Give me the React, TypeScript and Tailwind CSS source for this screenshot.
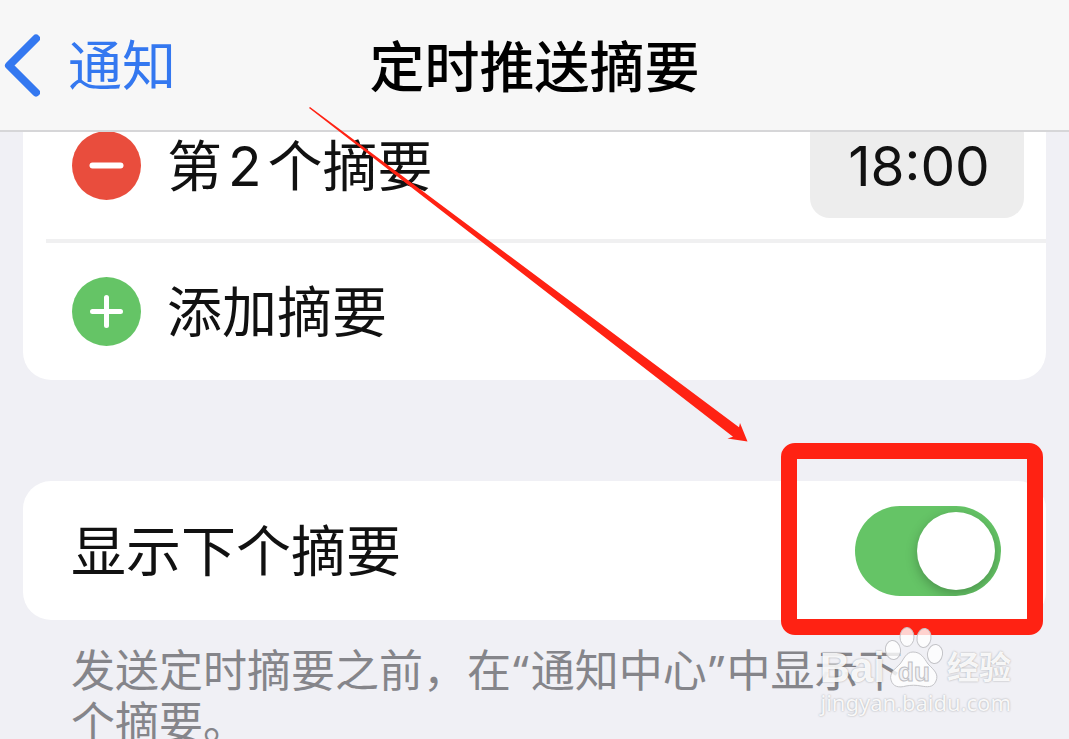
import React, { useState } from 'react';

interface SummaryRowProps {
  kind: 'remove' | 'add';
  children: React.ReactNode;
}

const RoundIcon: React.FC<{ kind: SummaryRowProps['kind'] }> = ({ kind }) => (
  <svg className="h-[69px] w-[69px] shrink-0" viewBox="0 0 69 69" fill="none" aria-hidden="true">
    <circle cx="34.5" cy="34.5" r="34.5" fill={kind === 'add' ? '#65c466' : '#e94d3d'} />
    <path d={kind === 'add' ? 'M20.5 34.5h28M34.5 20.5v28' : 'M20.5 34.5h28'} stroke="white" strokeWidth={kind === 'add' ? 5 : 6} strokeLinecap="round" />
  </svg>
);

const SummaryButton: React.FC<SummaryRowProps> = ({ kind, children }) => (
  <button type="button" className="flex items-center gap-[26px] text-[55px] leading-[64px] text-[#111]">
    <RoundIcon kind={kind} />
    <span>{children}</span>
  </button>
);

const NavBar = () => (
  <header className="relative z-10 grid h-[132px] shrink-0 grid-cols-[1fr_auto_1fr] items-center border-b-2 border-[#d6d6d8] bg-[#f7f7f7]">
    <a href="#notifications" className="flex items-center gap-7 pl-1 text-[54px] leading-[64px] text-[#3478f0]">
      <svg className="h-16 w-9" viewBox="0 0 36 64" fill="none" aria-hidden="true">
        <path d="M32 5.5L5 32.5L32 59.5" stroke="currentColor" strokeWidth="8" strokeLinecap="round" strokeLinejoin="round" />
      </svg>
      <span className="pt-1">通知</span>
    </a>
    <h1 className="pt-1 text-[55px] font-medium leading-[64px] text-black">定时推送摘要</h1>
  </header>
);

const Arrow = () => (
  <svg className="pointer-events-none absolute left-[309px] top-[107px] z-20 h-[335px] w-[439px]" viewBox="0 0 439 335" aria-hidden="true">
    <path d="M0 1L1 0L430 320.3L431 316L438.5 334.5L418.5 331.5L424 329.7Z" fill="#ff2213" />
  </svg>
);

const Watermark = () => (
  <div className="pointer-events-none absolute right-[58px] top-[624px] z-20 flex flex-col items-end text-white/90 [text-shadow:0_0_2px_rgba(0,0,0,0.35)]">
    <div className="flex h-[64px] items-end">
      <span className="font-['Liberation_Sans'] text-[42px] font-bold leading-[40px]">Bai</span>
      <svg className="h-[62px] w-[58px]" viewBox="0 0 58 62" fill="rgba(255,255,255,.8)" stroke="#c4c4c8" strokeWidth="1" aria-hidden="true">
        <ellipse cx="8" cy="24" rx="7.5" ry="9.5" transform="rotate(-8 8 24)" />
        <ellipse cx="22" cy="11" rx="7" ry="9.5" />
        <ellipse cx="39" cy="12" rx="7" ry="9.5" transform="rotate(8 39 12)" />
        <ellipse cx="50" cy="28" rx="7.5" ry="9.5" transform="rotate(8 50 28)" />
        <path d="M28 26C36 26 39 32 43 38C49 44 54 48 51 55C48 62 42 61 36 60C31 59 26 59 21 60C14 62 8 61 6 54C4 47 10 43 15 38C19 33 21 26 28 26Z" />
        <text x="29" y="55" textAnchor="middle" fontFamily="Liberation Sans" fontSize="26" fontWeight="bold" fill="#f2f2f5" stroke="#c0c0c4" style={{ textShadow: 'none' }}>du</text>
      </svg>
      <span className="pl-1 text-[32px] font-bold leading-[40px]">经验</span>
    </div>
    <span className="font-['Noto_Sans'] text-[22px] leading-[28px]">jingyan.baidu.com</span>
  </div>
);

export default function App() {
  const [showNext, setShowNext] = useState(true);

  return (
    <div className="relative flex h-screen flex-col overflow-hidden bg-[#f0f0f5] font-['Inter','Noto_Sans_CJK_SC',sans-serif]">
      <NavBar />

      <main className="px-[23px]">
        {/* the list is scrolled, its first row slides under the bar */}
        <section className="-mt-10 rounded-[28px] bg-white">
          <div className="flex h-[147px] items-center justify-between pl-[49px] pr-[22px]">
            <SummaryButton kind="remove">
              第<span className="mx-1.5">2</span>个摘要
            </SummaryButton>
            <button type="button" className="h-[104px] w-[214px] rounded-[20px] bg-[#ededed] pl-1 text-[55px] leading-[64px] text-[#111]">
              18:00
            </button>
          </div>
          <div className="ml-[23px] flex h-[141px] items-center border-t-4 border-[#f0f0f1] pl-[26px]">
            <SummaryButton kind="add">添加摘要</SummaryButton>
          </div>
        </section>

        <section className="relative mt-[101px] flex h-[139px] items-center justify-between rounded-[28px] bg-white pl-12 pr-[45px]">
          <label htmlFor="show-next" className="text-[55px] leading-[64px] text-[#111]">显示下个摘要</label>
          <input
            id="show-next"
            type="checkbox"
            role="switch"
            checked={showNext}
            onChange={e => setShowNext(e.target.checked)}
            className="flex h-[90px] w-[146px] appearance-none items-center overflow-hidden rounded-full bg-[#e9e9ea] p-[6px] before:h-[78px] before:w-[78px] before:rounded-full before:bg-white before:shadow-[0_4px_12px_rgba(0,0,0,0.25)] checked:justify-end checked:bg-[#65c466]"
          />
          <div className="pointer-events-none absolute -bottom-[15px] -top-[38px] right-[3px] w-[262px] rounded-[14px] border-[16px] border-[#ff2213]" />
        </section>

        <p className="mt-6 pl-12 pr-32 text-[44px] leading-[52px] text-[#85858a]">
          发送定时摘要之前，在<span className="px-0.5 font-['Noto_Sans']">“</span>通知中心<span className="px-0.5 font-['Noto_Sans']">”</span>中显示下个摘要。
        </p>
      </main>

      <Arrow />
      <Watermark />
    </div>
  );
}
